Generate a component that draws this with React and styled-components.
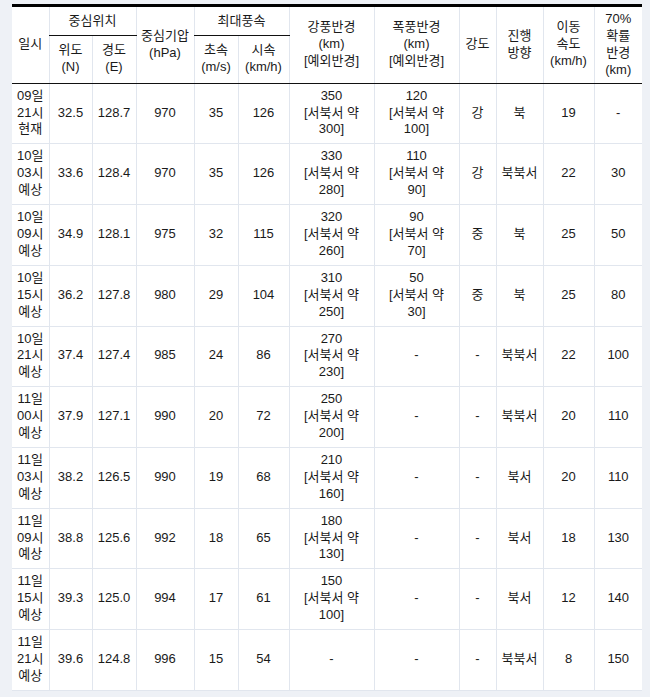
import React from "react";
import styled, { createGlobalStyle } from "styled-components";

const GlobalStyle = createGlobalStyle`
  html, body {
    margin: 0;
    background: #eef1f6;
  }
  body {
    font-family: "Liberation Sans", "Noto Sans CJK KR", sans-serif;
    color: #1a1a1a;
  }
`;

const rows = [
  { date: ["09일", "21시", "현재"], lat: "32.5", lon: "128.7", hpa: "970", ms: "35", kmh: "126", gale: ["350", "[서북서 약", "300]"], storm: ["120", "[서북서 약", "100]"], power: "강", dir: "북", speed: "19", radius: "-" },
  { date: ["10일", "03시", "예상"], lat: "33.6", lon: "128.4", hpa: "970", ms: "35", kmh: "126", gale: ["330", "[서북서 약", "280]"], storm: ["110", "[서북서 약", "90]"], power: "강", dir: "북북서", speed: "22", radius: "30" },
  { date: ["10일", "09시", "예상"], lat: "34.9", lon: "128.1", hpa: "975", ms: "32", kmh: "115", gale: ["320", "[서북서 약", "260]"], storm: ["90", "[서북서 약", "70]"], power: "중", dir: "북", speed: "25", radius: "50" },
  { date: ["10일", "15시", "예상"], lat: "36.2", lon: "127.8", hpa: "980", ms: "29", kmh: "104", gale: ["310", "[서북서 약", "250]"], storm: ["50", "[서북서 약", "30]"], power: "중", dir: "북", speed: "25", radius: "80" },
  { date: ["10일", "21시", "예상"], lat: "37.4", lon: "127.4", hpa: "985", ms: "24", kmh: "86", gale: ["270", "[서북서 약", "230]"], storm: ["-"], power: "-", dir: "북북서", speed: "22", radius: "100" },
  { date: ["11일", "00시", "예상"], lat: "37.9", lon: "127.1", hpa: "990", ms: "20", kmh: "72", gale: ["250", "[서북서 약", "200]"], storm: ["-"], power: "-", dir: "북북서", speed: "20", radius: "110" },
  { date: ["11일", "03시", "예상"], lat: "38.2", lon: "126.5", hpa: "990", ms: "19", kmh: "68", gale: ["210", "[서북서 약", "160]"], storm: ["-"], power: "-", dir: "북서", speed: "20", radius: "110" },
  { date: ["11일", "09시", "예상"], lat: "38.8", lon: "125.6", hpa: "992", ms: "18", kmh: "65", gale: ["180", "[서북서 약", "130]"], storm: ["-"], power: "-", dir: "북서", speed: "18", radius: "130" },
  { date: ["11일", "15시", "예상"], lat: "39.3", lon: "125.0", hpa: "994", ms: "17", kmh: "61", gale: ["150", "[서북서 약", "100]"], storm: ["-"], power: "-", dir: "북서", speed: "12", radius: "140" },
  { date: ["11일", "21시", "예상"], lat: "39.6", lon: "124.8", hpa: "996", ms: "15", kmh: "54", gale: ["-"], storm: ["-"], power: "-", dir: "북북서", speed: "8", radius: "150" },
];

const colWidths = [37, 43, 44, 58, 44, 51, 85, 85, 37, 47, 51, 48];

const Page = styled.div`
  padding: 4px 8px 8px 12px;
`;

const Table = styled.table`
  width: 630px;
  table-layout: fixed;
  border-collapse: collapse;
  background: #fff;
  border-top: 3px solid #000;
  font-size: 13px;
  line-height: 16.9px;
  text-align: center;
`;

const Th = styled.th`
  font-weight: normal;
  padding: 4px 0;
  border-left: 1px solid #e1e6ee;
  border-bottom: 1px solid #111;
  vertical-align: middle;
  &:first-child {
    border-left: none;
  }
`;

const SubTh = styled(Th)`
  &:first-child {
    border-left: 1px solid #e1e6ee;
  }
`;

const Td = styled.td`
  padding: 4px 0 5px;
  border-left: 1px solid #e1e6ee;
  border-bottom: 1px solid #e1e6ee;
  vertical-align: middle;
  &:first-child {
    border-left: none;
  }
`;

const Lines = ({ items }) =>
  items.map((t, i) => (
    <React.Fragment key={i}>
      {i > 0 && <br />}
      {t}
    </React.Fragment>
  ));

export default function App() {
  return (
    <Page>
      <GlobalStyle />
      <Table>
        <colgroup>
          {colWidths.map((w, i) => (
            <col key={i} style={{ width: w }} />
          ))}
        </colgroup>
        <thead>
          <tr>
            <Th rowSpan={2}>일시</Th>
            <Th colSpan={2}>중심위치</Th>
            <Th rowSpan={2}><Lines items={["중심기압", "(hPa)"]} /></Th>
            <Th colSpan={2}>최대풍속</Th>
            <Th rowSpan={2}><Lines items={["강풍반경", "(km)", "[예외반경]"]} /></Th>
            <Th rowSpan={2}><Lines items={["폭풍반경", "(km)", "[예외반경]"]} /></Th>
            <Th rowSpan={2}>강도</Th>
            <Th rowSpan={2}><Lines items={["진행", "방향"]} /></Th>
            <Th rowSpan={2}><Lines items={["이동", "속도", "(km/h)"]} /></Th>
            <Th rowSpan={2}><Lines items={["70%", "확률", "반경", "(km)"]} /></Th>
          </tr>
          <tr>
            <SubTh><Lines items={["위도", "(N)"]} /></SubTh>
            <SubTh><Lines items={["경도", "(E)"]} /></SubTh>
            <SubTh><Lines items={["초속", "(m/s)"]} /></SubTh>
            <SubTh><Lines items={["시속", "(km/h)"]} /></SubTh>
          </tr>
        </thead>
        <tbody>
          {rows.map((r, i) => (
            <tr key={i}>
              <Td><Lines items={r.date} /></Td>
              <Td>{r.lat}</Td>
              <Td>{r.lon}</Td>
              <Td>{r.hpa}</Td>
              <Td>{r.ms}</Td>
              <Td>{r.kmh}</Td>
              <Td><Lines items={r.gale} /></Td>
              <Td><Lines items={r.storm} /></Td>
              <Td>{r.power}</Td>
              <Td>{r.dir}</Td>
              <Td>{r.speed}</Td>
              <Td>{r.radius}</Td>
            </tr>
          ))}
        </tbody>
      </Table>
    </Page>
  );
}
